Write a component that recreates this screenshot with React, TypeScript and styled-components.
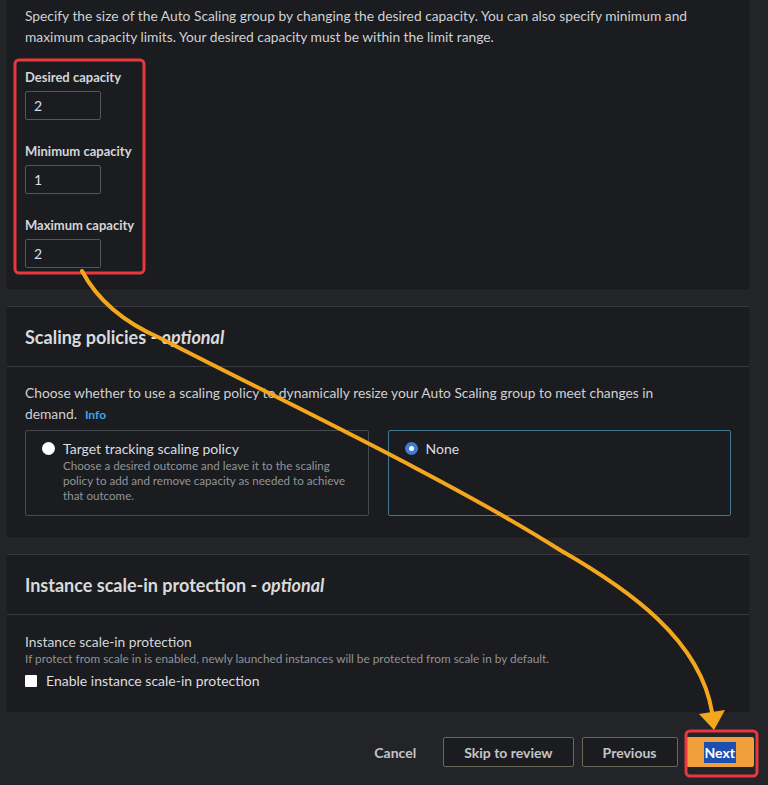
import styled, { createGlobalStyle } from "styled-components";

const GlobalStyle = createGlobalStyle`
  html, body {
    margin: 0;
    padding: 0;
    background: #232427;
  }
  body {
    font-family: Lato, "Open Sans", sans-serif;
    color: #d1d5db;
    -webkit-font-smoothing: antialiased;
  }
`;

const Page = styled.div`
  position: relative;
  width: 768px;
  height: 785px;
  overflow: hidden;
  box-sizing: border-box;
  padding: 0 19px 0 7px;
  display: flex;
  flex-direction: column;
  gap: 18px;
`;

const Panel = styled.section<{ $top?: boolean }>`
  background: #1b1c1f;
  border-top: ${(p) => (p.$top ? "none" : "1px solid #37393c")};
  box-shadow: 0 1px 1px rgba(0, 0, 0, 0.3);
`;

const PanelHeader = styled.div`
  height: 59px;
  display: flex;
  align-items: center;
  padding: 0 18px;
  border-bottom: 1px solid #37393c;
`;

const Title = styled.h2`
  margin: 0;
  font-size: 18px;
  font-weight: 700;
  color: #d9dadc;
  em {
    font-weight: 700;
    font-style: italic;
  }
`;

const PanelBody = styled.div<{ $pt?: number; $pb?: number }>`
  padding: ${(p) => p.$pt ?? 18}px 18px ${(p) => p.$pb ?? 20}px;
`;

const Text = styled.p`
  margin: 0;
  font-size: 13.8px;
  line-height: 20.5px;
  color: #cfd1d4;
`;

const InfoLink = styled.a`
  color: #44a4e6;
  font-size: 12px;
  font-weight: 700;
  margin-left: 8px;
`;

const FieldStack = styled.div`
  display: flex;
  flex-direction: column;
  gap: 22px;
  margin-top: 21px;
`;

const Field = styled.div`
  display: flex;
  flex-direction: column;
  gap: 5px;
`;

const FieldLabel = styled.label`
  font-size: 13px;
  font-weight: 700;
  line-height: 18px;
  color: #d4d6d8;
`;

const NumberBox = styled.div`
  width: 76px;
  height: 29px;
  box-sizing: border-box;
  border: 1px solid #53565b;
  border-radius: 2px;
  display: flex;
  align-items: center;
  padding-left: 8px;
  font-size: 14px;
  color: #dcdde0;
`;

const Cards = styled.div`
  display: grid;
  grid-template-columns: 1fr 1fr;
  gap: 19px;
  margin-top: 5px;
`;

const Card = styled.div<{ $selected?: boolean }>`
  height: 86px;
  box-sizing: border-box;
  border: 1px solid ${(p) => (p.$selected ? "#43788d" : "#46494d")};
  border-radius: 2px;
  padding: 8px 8px 0 16px;
  display: flex;
  gap: 8px;
  align-items: flex-start;
`;

const Radio = styled.span<{ $checked?: boolean }>`
  flex: none;
  width: 13px;
  height: 13px;
  margin-top: 3px;
  border-radius: 50%;
  box-sizing: border-box;
  background: #ffffff;
  border: ${(p) => (p.$checked ? "4px solid #3d7ccf" : "none")};
`;

const CardText = styled.div`
  display: flex;
  flex-direction: column;
`;

const CardTitle = styled.span`
  font-size: 14px;
  line-height: 19px;
  color: #dcdde0;
`;

const CardDesc = styled.span`
  font-size: 11.6px;
  line-height: 15px;
  color: #90959b;
`;

const SubLabel = styled.div`
  font-size: 13.8px;
  line-height: 17px;
  color: #d4d6d8;
`;

const SubDesc = styled.div`
  font-size: 11.8px;
  line-height: 17px;
  color: #8e9399;
`;

const CheckRow = styled.label`
  display: flex;
  align-items: center;
  gap: 9px;
  margin-top: 5px;
  font-size: 14px;
  color: #dcdde0;
`;

const CheckBox = styled.span`
  width: 12px;
  height: 12px;
  background: #ffffff;
  border-radius: 1px;
`;

const Footer = styled.div`
  display: flex;
  justify-content: flex-end;
  align-items: center;
  gap: 8px;
  margin-top: 8px;
  margin-right: -5px;
`;

const Button = styled.button<{ $variant?: "link" | "normal" | "primary" }>`
  height: 30px;
  box-sizing: border-box;
  font-family: Lato, "Open Sans", sans-serif;
  font-size: 14px;
  font-weight: 700;
  border-radius: 2px;
  cursor: pointer;
  padding: ${(p) => (p.$variant === "link" ? "0" : p.$variant === "primary" ? "0 18px" : "0 20px")};
  color: ${(p) => (p.$variant === "primary" ? "#16191f" : "#c4c5c8")};
  background: ${(p) => (p.$variant === "primary" ? "#f0a03a" : p.$variant === "link" ? "transparent" : "#1b1c1f")};
  border: ${(p) => (p.$variant === "normal" ? "1px solid #6a665a" : "none")};
  margin-right: ${(p) => (p.$variant === "link" ? "19px" : "0")};
`;

const Selected = styled.span`
  background: #1d4fb0;
  color: #ffffff;
  padding: 2px 1px;
`;

const Overlay = styled.svg`
  position: absolute;
  left: 0;
  top: 0;
  pointer-events: none;
`;

export default function App() {
  return (
    <>
      <GlobalStyle />
      <Page>
        <Panel $top>
          <PanelBody $pt={6} $pb={20}>
            <Text>
              Specify the size of the Auto Scaling group by changing the desired capacity. You can also specify minimum and
              maximum capacity limits. Your desired capacity must be within the limit range.
            </Text>
            <FieldStack>
              <Field>
                <FieldLabel>Desired capacity</FieldLabel>
                <NumberBox>2</NumberBox>
              </Field>
              <Field>
                <FieldLabel>Minimum capacity</FieldLabel>
                <NumberBox>1</NumberBox>
              </Field>
              <Field>
                <FieldLabel>Maximum capacity</FieldLabel>
                <NumberBox>2</NumberBox>
              </Field>
            </FieldStack>
          </PanelBody>
        </Panel>

        <Panel>
          <PanelHeader>
            <Title>
              Scaling policies - <em>optional</em>
            </Title>
          </PanelHeader>
          <PanelBody $pt={16} $pb={20}>
            <Text>
              Choose whether to use a scaling policy to dynamically resize your Auto Scaling group to meet changes in
              <br />
              demand.
              <InfoLink>Info</InfoLink>
            </Text>
            <Cards>
              <Card>
                <Radio />
                <CardText>
                  <CardTitle>Target tracking scaling policy</CardTitle>
                  <CardDesc>
                    Choose a desired outcome and leave it to the scaling policy to add and remove capacity as needed to
                    achieve that outcome.
                  </CardDesc>
                </CardText>
              </Card>
              <Card $selected>
                <Radio $checked />
                <CardText>
                  <CardTitle>None</CardTitle>
                </CardText>
              </Card>
            </Cards>
          </PanelBody>
        </Panel>

        <Panel>
          <PanelHeader>
            <Title>
              Instance scale-in protection - <em>optional</em>
            </Title>
          </PanelHeader>
          <PanelBody $pt={18} $pb={22}>
            <SubLabel>Instance scale-in protection</SubLabel>
            <SubDesc>
              If protect from scale in is enabled, newly launched instances will be protected from scale in by default.
            </SubDesc>
            <CheckRow>
              <CheckBox />
              Enable instance scale-in protection
            </CheckRow>
          </PanelBody>
        </Panel>

        <Footer>
          <Button $variant="link">Cancel</Button>
          <Button $variant="normal">Skip to review</Button>
          <Button $variant="normal">Previous</Button>
          <Button $variant="primary">
            <Selected>Next</Selected>
          </Button>
        </Footer>

        <Overlay width="768" height="785" viewBox="0 0 768 785">
          <rect x="15" y="60" width="129" height="213" rx="4" fill="none" stroke="#e8383d" strokeWidth="3" />
          <rect x="686" y="731" width="71" height="45" rx="4" fill="none" stroke="#e8383d" strokeWidth="3" />
          <path
            d="M82 271 C100 305, 130 325, 160 338 C260 390, 450 480, 560 550 C630 590, 700 640, 712 712"
            fill="none"
            stroke="#f4a71d"
            strokeWidth="4"
            strokeLinecap="round"
          />
          <polygon points="699,714 725,710 714,730" fill="#f4a71d" />
        </Overlay>
      </Page>
    </>
  );
}
